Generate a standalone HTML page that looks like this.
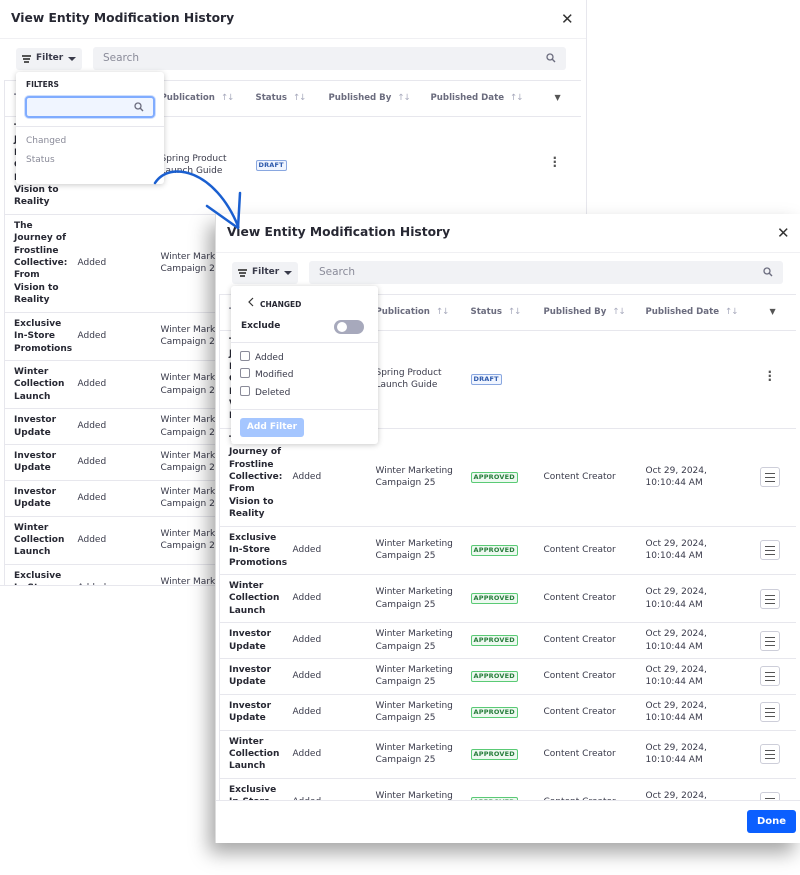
<!DOCTYPE html>
<html><head><meta charset="utf-8">
<style>
*{box-sizing:border-box;margin:0;padding:0}
body{width:800px;height:875px;background:#fff;position:relative;overflow:hidden;font-family:"DejaVu Sans","Liberation Sans",sans-serif;color:#272833;font-size:9px}
.panel{position:absolute;background:#fff;overflow:hidden}
#back{left:0;top:0;width:587px;height:586px;border-right:1px solid #e7e7ed;border-bottom:1px solid #e7e7ed}
#front{left:215px;top:214px;width:585px;height:629px;box-shadow:-6px 10px 18px rgba(0,0,0,.35);border-left:1px solid #ddd}
.title{position:absolute;left:11px;top:11px;font-weight:bold;font-size:12.3px;color:#272833}
.close{position:absolute;top:10px;font-size:15px;color:#333}
.hsep{position:absolute;left:0;right:0;top:38px;border-top:1px solid #f0f0f3}
.fbtn{position:absolute;left:16px;top:48px;width:66px;height:22px;background:#f1f2f5;border-radius:3px;font-weight:bold;font-size:9px;color:#393a4a;padding:5px 0 0 20px}
.fbtn:before{content:"";position:absolute;left:6px;top:7px;width:9px;height:1.5px;background:#555}
.fbtn i{position:absolute;left:8px;top:13px;width:5px;height:1.5px;background:#555}
.fbtn b{position:absolute;left:7px;top:10px;width:7px;height:1.5px;background:#555}
.fbtn:after{content:"";position:absolute;right:6px;top:9px;border:4px solid transparent;border-top:4px solid #393a4a}
.search{position:absolute;left:93px;top:47px;height:23px;background:#f1f2f5;border-radius:3px;color:#8a8b99;font-size:10.5px;padding:5px 0 0 10px}
.search svg{position:absolute;right:10px;top:6px}
table{position:absolute;left:4px;top:80px;border-collapse:collapse;table-layout:fixed;border-top:1px solid #e7e7ed;border-left:1px solid #e7e7ed}
td,th{vertical-align:middle;text-align:left;padding:5px 0;line-height:12.4px;border-bottom:1px solid #e7e7ed}
th{height:36px;font-size:8.6px;color:#6b6c7e;font-weight:bold;white-space:nowrap}
th span{color:#a7a9bc;font-weight:normal;margin-left:6px;letter-spacing:-1px}
td.t{font-weight:bold;padding-left:9px;padding-right:8px}
td.c,td.p,td.b,td.d{color:#393a4a}
.lbl{display:inline-block;font-size:6.5px;font-weight:bold;padding:1px 2px;border:1px solid;border-radius:2px;line-height:7px;letter-spacing:.2px}
.dr{color:#2e5aac;border-color:#89a7e0;background:#f0f5ff}
.ap{color:#287d3c;border-color:#5aca75;background:#edf9f0}
.lb{display:inline-block;width:20px;height:20px;border:1px solid #cdced9;border-radius:3px;position:relative;margin-left:8px;vertical-align:middle}
.lb:before{content:"";position:absolute;left:4px;top:5px;width:10px;height:1px;background:#555;box-shadow:0 4px 0 #555,0 8px 0 #555}
.kb{margin-left:16px;font-weight:bold;font-size:12px;color:#555;line-height:4px;display:inline-block}
.pop{position:absolute;background:#fff;border-radius:3px;box-shadow:0 1px 6px rgba(0,0,0,.22)}
.arrow{position:absolute;left:0;top:0;pointer-events:none}
</style></head><body>

<div class="panel" id="back">
 <div class="title">View Entity Modification History</div>
 <div class="close" style="left:561px">✕</div>
 <div class="hsep"></div>
 <div class="fbtn"><b></b><i></i>Filter</div>
 <div class="search" style="width:473px">Search<svg width="10" height="10" viewBox="0 0 10 10"><circle cx="4" cy="4" r="3" fill="none" stroke="#6b6c7e" stroke-width="1.3"/><path d="M6.3 6.3L9 9" stroke="#6b6c7e" stroke-width="1.4"/></svg></div>
 <table id="tb1"></table>
</div>

<div class="pop" style="left:16px;top:72px;width:148px;height:112px">
 <div style="position:absolute;left:10px;top:8px;font-size:7.5px;font-weight:bold;color:#272833">FILTERS</div>
 <div style="position:absolute;left:9px;top:24px;width:130px;height:22px;border:2px solid #80acff;border-radius:4px;background:#f0f5ff;box-shadow:0 0 0 1px #cfdffd"><svg width="10" height="10" viewBox="0 0 10 10" style="position:absolute;right:9px;top:4px"><circle cx="4" cy="4" r="3" fill="none" stroke="#6b6c7e" stroke-width="1.3"/><path d="M6.3 6.3L9 9" stroke="#6b6c7e" stroke-width="1.4"/></svg></div>
 <div style="position:absolute;left:0;right:0;top:54px;border-top:1px solid #e7e7ed"></div>
 <div style="position:absolute;left:10px;top:64px;color:#8a8b99">Changed</div>
 <div style="position:absolute;left:10px;top:83px;color:#8a8b99">Status</div>
</div>

<div class="panel" id="front">
 <div class="title">View Entity Modification History</div>
 <div class="close" style="left:561px">✕</div>
 <div class="hsep"></div>
 <div class="fbtn"><b></b><i></i>Filter</div>
 <div class="search" style="width:474px">Search<svg width="10" height="10" viewBox="0 0 10 10"><circle cx="4" cy="4" r="3" fill="none" stroke="#6b6c7e" stroke-width="1.3"/><path d="M6.3 6.3L9 9" stroke="#6b6c7e" stroke-width="1.4"/></svg></div>
 <table id="tb2" style="left:3px"></table>
 <div style="position:absolute;left:0;right:0;top:586px;bottom:0;background:#fff;border-top:1px solid #e7e7ed"></div>
 <div style="position:absolute;left:531px;top:596px;width:49px;height:23px;background:#0b5fff;border-radius:3px;color:#fff;font-weight:bold;font-size:10px;text-align:center;line-height:23px">Done</div>
</div>

<svg class="arrow" width="800" height="875"><path d="M155 183 C170 160,215 170,238 226" fill="none" stroke="#1a5fd0" stroke-width="2.5" stroke-linecap="round"/><path d="M238 228 L240 193 M238 228 L207 206" stroke="#1a5fd0" stroke-width="2.5" stroke-linecap="round"/></svg>

<div class="pop" style="left:231px;top:286px;width:147px;height:158px">
 <svg width="8" height="10" viewBox="0 0 8 10" style="position:absolute;left:16px;top:11px"><path d="M6 1L2 5L6 9" fill="none" stroke="#333" stroke-width="1.2"/></svg>
 <div style="position:absolute;left:29px;top:14px;font-size:7.5px;font-weight:bold;color:#272833">CHANGED</div>
 <div style="position:absolute;left:10px;top:35px;font-weight:bold;font-size:9px">Exclude</div>
 <div style="position:absolute;left:103px;top:34px;width:30px;height:14px;border-radius:7px;background:#a7a9bc"><div style="position:absolute;left:3px;top:2px;width:10px;height:10px;border-radius:5px;background:#fff"></div></div>
 <div style="position:absolute;left:0;right:0;top:56px;border-top:1px solid #e7e7ed"></div>
 <div style="position:absolute;left:9px;top:64px;line-height:17.3px;color:#393a4a">
  <div><span style="display:inline-block;width:10px;height:10px;border:1px solid #8a8b99;border-radius:2px;vertical-align:-1px;margin-right:5px"></span>Added</div>
  <div><span style="display:inline-block;width:10px;height:10px;border:1px solid #8a8b99;border-radius:2px;vertical-align:-1px;margin-right:5px"></span>Modified</div>
  <div><span style="display:inline-block;width:10px;height:10px;border:1px solid #8a8b99;border-radius:2px;vertical-align:-1px;margin-right:5px"></span>Deleted</div>
 </div>
 <div style="position:absolute;left:0;right:0;top:123px;border-top:1px solid #e7e7ed"></div>
 <div style="position:absolute;left:9px;top:132px;width:64px;height:19px;background:#a5c6ff;border-radius:3px;color:#fff;font-weight:bold;font-size:9px;text-align:center;line-height:19px">Add Filter</div>
</div>

<script>
var cols=[73,83,95,73,102,106,44];
var J="The Journey of Frostline Collective: From Vision to Reality";
var W="Winter Marketing Campaign 25";
var rows=[[J,"","Spring Product Launch Guide",0],[J,"Added",W,1],["Exclusive In-Store Promotions","Added",W,1],["Winter Collection Launch","Added",W,1],["Investor Update","Added",W,1],["Investor Update","Added",W,1],["Investor Update","Added",W,1],["Winter Collection Launch","Added",W,1],["Exclusive In-Store Promotions","Added",W,1]];
function build(id,w){
 var h='<colgroup>'+cols.map(function(c){return '<col style="width:'+c+'px">'}).join('')+'</colgroup>';
 h+='<tr><th style="padding-left:9px">Title</th><th>Changed</th><th>Publication<span>↑↓</span></th><th>Status<span>↑↓</span></th><th>Published By<span>↑↓</span></th><th>Published Date<span>↑↓</span></th><th><span style="margin-left:18px;color:#555;font-size:8px">▼</span></th></tr>';
 rows.forEach(function(r){
  h+='<tr><td class="t">'+r[0]+'</td><td class="c">'+r[1]+'</td><td class="p" style="padding-right:8px">'+r[2]+'</td><td>'+(r[3]?'<span class="lbl ap">APPROVED</span>':'<span class="lbl dr">DRAFT</span>')+'</td><td class="b">'+(r[3]?'Content Creator':'')+'</td><td class="d">'+(r[3]?'Oct 29, 2024,<br>10:10:44 AM':'')+'</td><td>'+(r[3]?'<span class="lb"></span>':'<span class="kb">·<br>·<br>·</span>')+'</td></tr>';
 });
 var t=document.getElementById(id);t.innerHTML=h;t.style.width=w+'px';
}
build('tb1',576);build('tb2',576);
</script>
</body></html>
